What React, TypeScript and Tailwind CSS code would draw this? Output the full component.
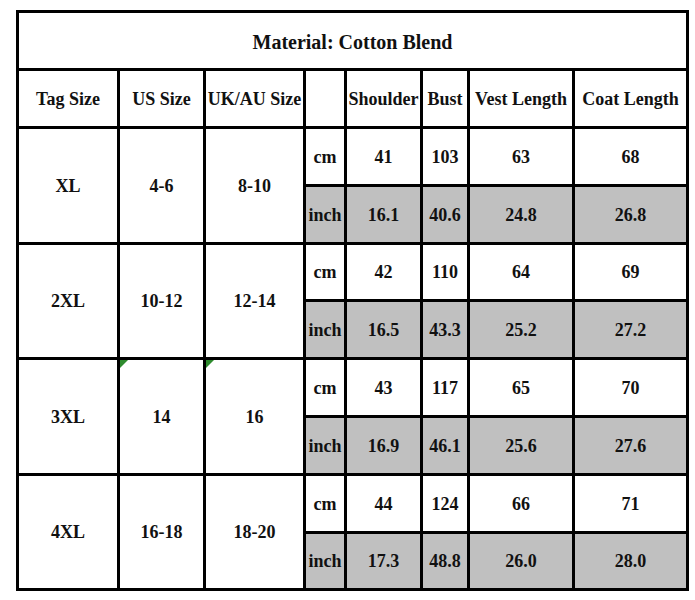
const headers = ["Tag Size", "US Size", "UK/AU Size", "", "Shoulder", "Bust", "Vest Length", "Coat Length"];

interface SizeRow {
  readonly tag: string;
  readonly us: string;
  readonly uk: string;
  readonly cm: readonly string[];
  readonly inch: readonly string[];
  readonly mark?: boolean;
}

const sizes: readonly SizeRow[] = [
  { tag: "XL", us: "4-6", uk: "8-10", cm: ["41", "103", "63", "68"], inch: ["16.1", "40.6", "24.8", "26.8"] },
  { tag: "2XL", us: "10-12", uk: "12-14", cm: ["42", "110", "64", "69"], inch: ["16.5", "43.3", "25.2", "27.2"] },
  { tag: "3XL", us: "14", uk: "16", cm: ["43", "117", "65", "70"], inch: ["16.9", "46.1", "25.6", "27.6"], mark: true },
  { tag: "4XL", us: "16-18", uk: "18-20", cm: ["44", "124", "66", "71"], inch: ["17.3", "48.8", "26.0", "28.0"] },
];

function Cell({ children, gray = false, className = "" }: { children?: React.ReactNode; gray?: boolean; className?: string }) {
  return (
    <div
      className={`flex items-center justify-center whitespace-nowrap ${gray ? "bg-[#c0c0c0]" : "bg-white"} ${className}`}
    >
      {children}
    </div>
  );
}

function GreenMark() {
  return (
    <span className="absolute left-0 top-0 h-0 w-0 border-l-[4px] border-t-[4px] border-l-[#2e8b2e] border-t-[#2e8b2e] border-r-transparent border-b-transparent border-r-[4px] border-b-[4px]" />
  );
}

export default function App() {
  return (
    <div className="min-h-[600px] w-[695px] bg-white pl-[16px] pt-[10px]">
      <div className="grid w-[673px] bg-black p-[3px] font-['Liberation_Serif','Times_New_Roman',serif] text-[18px] font-bold leading-none text-[#111]">
        <div className="grid grid-cols-[98px_83px_97px_38px_73px_44px_102px_111px] grid-rows-[55px_55px_55px_55px_54px_55px_55px_55px_55px_54px] gap-[3px]">
          <Cell className="col-span-8 pb-[1px] pt-[4px] text-[20px]">Material: Cotton Blend</Cell>
          {headers.map((label, index) => (
            <Cell key={index}>{label}</Cell>
          ))}
          {sizes.map((size) => (
            <div key={size.tag} className="contents">
              <Cell className="row-span-2">{size.tag}</Cell>
              <Cell className="relative row-span-2">
                {size.mark && <GreenMark />}
                {size.us}
              </Cell>
              <Cell className="relative row-span-2">
                {size.mark && <GreenMark />}
                {size.uk}
              </Cell>
              <Cell>cm</Cell>
              {size.cm.map((value, index) => (
                <Cell key={`cm-${index}`}>{value}</Cell>
              ))}
              <Cell gray>inch</Cell>
              {size.inch.map((value, index) => (
                <Cell key={`in-${index}`} gray>
                  {value}
                </Cell>
              ))}
            </div>
          ))}
        </div>
      </div>
    </div>
  );
}
